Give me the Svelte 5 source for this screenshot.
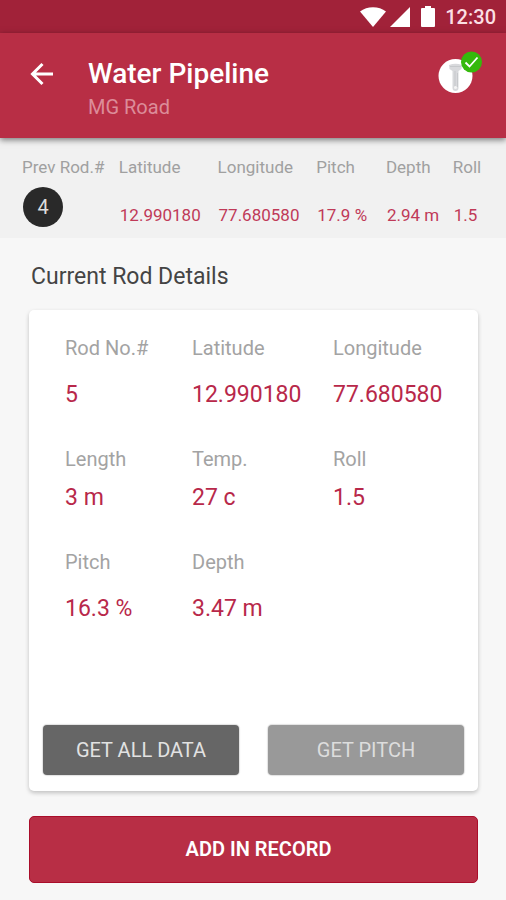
<script>
  const previous = [
    { label: 'Latitude', value: '12.990180' },
    { label: 'Longitude', value: '77.680580' },
    { label: 'Pitch', value: '17.9 %' },
    { label: 'Depth', value: '2.94 m' },
    { label: 'Roll', value: '1.5' }
  ];

  const rows = [
    {
      compact: false,
      items: [
        { label: 'Rod No.#', value: '5' },
        { label: 'Latitude', value: '12.990180' },
        { label: 'Longitude', value: '77.680580' }
      ]
    },
    {
      compact: true,
      items: [
        { label: 'Length', value: '3 m' },
        { label: 'Temp.', value: '27 c' },
        { label: 'Roll', value: '1.5' }
      ]
    },
    {
      compact: false,
      items: [
        { label: 'Pitch', value: '16.3 %' },
        { label: 'Depth', value: '3.47 m' }
      ]
    }
  ];
</script>

<div class="screen">
  <div class="status">
    <svg width="26" height="20" viewBox="0 0 26 20" aria-hidden="true">
      <path d="M0 4.5C7-1.3 19-1.3 26 4.5L13 20Z" fill="#fff" />
    </svg>
    <svg width="20" height="20" viewBox="0 0 20 20" aria-hidden="true">
      <path d="M20 0V20H0Z" fill="#fff" />
    </svg>
    <svg class="battery" width="14" height="21" viewBox="0 0 14 21" aria-hidden="true">
      <path d="M4 0H10V2H13Q14 2 14 3V20Q14 21 13 21H1Q0 21 0 20V3Q0 2 1 2H4Z" fill="#fff" />
    </svg>
    <span class="clock">12:30</span>
  </div>

  <header>
    <button class="icon-button" type="button" aria-label="Back">
      <svg width="24" height="24" viewBox="0 0 24 24" fill="none" stroke="#fff" stroke-width="3" aria-hidden="true">
        <path d="M23 12H2.500M12.500 2L2.500 12L12.500 22" />
      </svg>
    </button>
    <div class="heading">
      <h1>Water Pipeline</h1>
      <p>MG Road</p>
    </div>
    <button class="icon-button" type="button" aria-label="Probe connected">
      <svg width="46" height="44" viewBox="0 0 46 44" aria-hidden="true">
        <circle cx="17.5" cy="25" r="17" fill="#fff" />
        <path d="M11 14Q17.500 11.500 24 14L23.500 18L20.500 20V37Q20.500 40 17.500 40Q14.500 40 14.500 37V20L11.500 18Z" fill="#d8d9dc" />
        <path d="M12 15.500H23M17 20V35M19.500 22V36" fill="none" stroke="#c6c8cb" stroke-width="1" />
        <circle cx="17.500" cy="36.500" r="1.500" fill="#f4f4f4" />
        <circle cx="33.500" cy="11" r="10.500" fill="#35b90c" />
        <path d="M27.500 11.500L31.500 15.500L39.500 6.500" fill="none" stroke="#fff" stroke-width="1.800" />
      </svg>
    </button>
  </header>

  <section class="previous" aria-label="Previous rod">
    <table>
      <colgroup>
        <col class="c-rod" />
        <col class="c-coord" />
        <col class="c-coord" />
        <col class="c-pitch" />
        <col class="c-depth" />
        <col />
      </colgroup>
      <thead>
        <tr>
          <th scope="col">Prev Rod.#</th>
          {#each previous as item}
            <th scope="col">{item.label}</th>
          {/each}
        </tr>
      </thead>
      <tbody>
        <tr>
          <td><span class="rod">4</span></td>
          {#each previous as item}
            <td class="reading">{item.value}</td>
          {/each}
        </tr>
      </tbody>
    </table>
  </section>

  <main>
    <h2>Current Rod Details</h2>
    <section class="card">
      <div class="details">
        {#each rows as row}
          <dl class:compact={row.compact}>
            {#each row.items as item}
              <div>
                <dt>{item.label}</dt>
                <dd>{item.value}</dd>
              </div>
            {/each}
          </dl>
        {/each}
      </div>
      <div class="actions">
        <button class="all" type="button">GET ALL DATA</button>
        <button class="pitch" type="button">GET PITCH</button>
      </div>
    </section>
    <button class="add" type="button">ADD IN RECORD</button>
  </main>
</div>

<style>
  :global(body) {
    margin: 0;
    background: #f7f7f7;
  }

  .screen {
    font-family: Roboto, 'Liberation Sans', sans-serif;
    min-height: 100vh;
    background: #f7f7f7;
  }

  h1, h2, p, dl, dd {
    margin: 0;
    font-weight: 400;
  }

  button {
    border: 0;
    font-family: inherit;
    cursor: pointer;
  }

  .status {
    display: flex;
    align-items: center;
    justify-content: flex-end;
    gap: 4px;
    height: 33px;
    padding-right: 10px;
    background: #a12239;
    color: #fbdfe3;
  }

  .battery {
    margin-left: 7px;
  }

  .clock {
    margin-left: 6px;
    font-size: 20px;
    font-weight: 500;
  }

  header {
    position: relative;
    display: flex;
    align-items: flex-start;
    height: 105px;
    box-sizing: border-box;
    padding: 18px 22px 0 30px;
    background: #b82e45;
    box-shadow: 0 2px 6px rgba(0, 0, 0, 0.5);
  }

  .icon-button {
    display: flex;
    padding: 0;
    background: none;
  }

  header > .icon-button:first-child {
    padding-top: 11px;
  }

  .heading {
    flex: 1;
    padding: 6px 0 0 34px;
  }

  h1 {
    font-size: 28px;
    line-height: 34px;
    font-weight: 500;
    color: #fff;
  }

  .heading p {
    font-size: 20px;
    line-height: 32px;
    color: #dc8c99;
  }

  .previous {
    height: 100px;
    box-sizing: border-box;
    padding: 17px 0 0 22px;
    background: #f1f1f1;
  }

  table {
    width: 100%;
    table-layout: fixed;
    border-collapse: collapse;
    font-size: 17px;
    white-space: nowrap;
  }

  .c-rod { width: 20%; }
  .c-coord { width: 20.4%; }
  .c-pitch { width: 14.4%; }
  .c-depth { width: 13.8%; }

  th, td {
    padding: 0;
    text-align: left;
    font-weight: 400;
  }

  th {
    height: 24px;
    color: #a0a0a0;
  }

  .reading {
    padding: 24px 0 0 1px;
    color: #c03a58;
  }

  .rod {
    display: flex;
    align-items: center;
    justify-content: center;
    width: 40px;
    height: 40px;
    margin: 8px 0 0 1px;
    border-radius: 50%;
    background: #292929;
    color: #ddd;
    font-size: 20px;
  }

  main {
    padding: 22px 28px 17px 29px;
  }

  h2 {
    padding-left: 2px;
    font-size: 23px;
    line-height: 34px;
    color: #444;
  }

  .card {
    margin-top: 16px;
    padding: 26px 14px 16px;
    border-radius: 5px;
    background: #fff;
    box-shadow: 0 2px 4px rgba(0, 0, 0, 0.22);
  }

  .details {
    display: flex;
    flex-direction: column;
    gap: 37px;
    padding-left: 22px;
  }

  dl {
    display: grid;
    grid-template-columns: 127fr 141fr 131fr;
  }

  dt {
    font-size: 20px;
    line-height: 24px;
    color: #a3a3a3;
  }

  dd {
    margin-top: 20px;
    font-size: 23px;
    line-height: 30px;
    color: #b8284a;
  }

  .compact dd {
    margin-top: 12px;
  }

  .actions {
    display: flex;
    gap: 29px;
    margin-top: 101px;
  }

  .actions button {
    flex: 1;
    height: 50px;
    border-radius: 4px;
    font-size: 20px;
    box-shadow: 0 0 1px 1px rgba(0, 0, 0, 0.12);
  }

  .all {
    background: #666;
    color: #e2e2e2;
  }

  .pitch {
    background: #999;
    color: #ddd;
  }

  .add {
    display: block;
    width: 100%;
    height: 67px;
    margin-top: 25px;
    padding: 0 0 2px 10px;
    border: 1px solid #a90d2a;
    border-radius: 5px;
    background: #b82e45;
    color: #fff;
    font-size: 20px;
    font-weight: 600;
  }
</style>
